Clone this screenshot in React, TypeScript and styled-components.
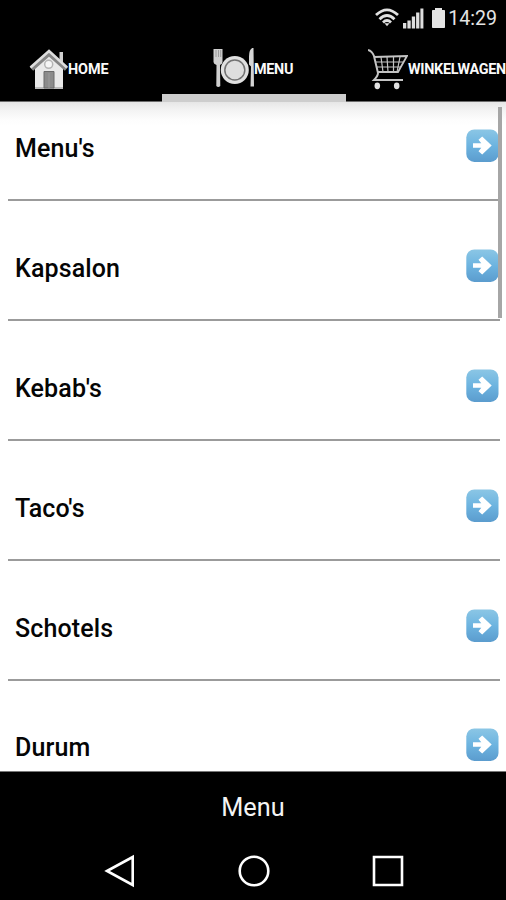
import React from "react";
import styled, { createGlobalStyle } from "styled-components";

const GlobalStyle = createGlobalStyle`
  * { box-sizing: border-box; }
  body { margin: 0; background: #000; overflow: hidden; font-family: Roboto, "Liberation Sans", sans-serif; }
`;

const Screen = styled.div`
  display: flex;
  flex-direction: column;
  width: 506px;
  height: 900px;
  overflow: hidden;
  background: #000;
`;

const StatusBar = styled.header`
  display: flex;
  flex: 0 0 36px;
  align-items: center;
  justify-content: flex-end;
  padding-right: 9px;
  color: #e4e4e4;
`;

const StatusIcons = styled.div`
  display: flex;
  align-items: center;
  margin-top: -1px;
`;

const Clock = styled.time`
  margin: 1px 0 0 2px;
  font-size: 19.6px;
  line-height: 36px;
`;

const TabBar = styled.nav`
  display: flex;
  flex: 0 0 65px;
  min-height: 0;
  height: 65px;
  border-bottom: 1px solid #6c6c6c;
`;

const Tab = styled.button<{ $width: number; $inset: number; $active?: boolean }>`
  position: relative;
  display: flex;
  flex: 0 0 ${(p) => p.$width}px;
  align-items: center;
  height: ${(p) => (p.$active ? 65 : 64)}px;
  margin: 0;
  padding: ${(p) => (p.$active ? 7 : 0)}px 0 0 ${(p) => p.$inset}px;
  border: 0;
  border-bottom: ${(p) => (p.$active ? 8 : 0)}px solid #cdcdcd;
  background: none;
  color: #fafafa;
  font: 700 14.4px/20px Roboto, sans-serif;
  text-align: left;
  white-space: nowrap;

  & + &::before {
    content: "";
    position: absolute;
    top: 15px;
    left: -1px;
    width: 1px;
    height: 34px;
    background: #2e2e2e;
  }
`;

const TabLabel = styled.span<{ $tracking: number }>`
  margin-top: 2px;
  letter-spacing: ${(p) => p.$tracking}px;
`;

const List = styled.main`
  position: relative;
  flex: 0 0 669px;
  overflow: hidden;
  background: linear-gradient(#e6e6e6 0, #f3f3f3 8px, #fdfdfd 18px, #fff 24px);
  padding: 0 6px 0 8px;
`;

const Row = styled.div<{ $first?: boolean }>`
  display: flex;
  align-items: center;
  justify-content: space-between;
  height: ${(p) => (p.$first ? 99.4 : 119.8)}px;
  padding: ${(p) => (p.$first ? 0 : 21)}px 1px 8px 7px;
  border-bottom: 2px solid #9b9b9b;
`;

const RowTitle = styled.span`
  margin-top: 5px;
  color: #050505;
  font-size: 25px;
  font-weight: 500;
  line-height: 34px;
  letter-spacing: 0.12px;
`;

const ArrowIcon = styled.svg`
  display: block;
  flex: none;
  margin: -1px 0 0;
`;

const Scrollbar = styled.div`
  position: absolute;
  top: 5px;
  right: 4px;
  width: 4px;
  height: 211px;
  background: #a6a6a6;
`;

const Caption = styled.footer`
  flex: 0 0 71px;
  border-top: 1px solid #777;
  color: #f4f4f4;
  font-size: 25.3px;
  line-height: 71px;
  text-align: center;
`;

const NavBar = styled.nav`
  display: flex;
  flex: 1;
  align-items: center;
  justify-content: center;
  gap: 98px;
  padding: 0 0 1px 1px;
`;

const NavIcon = styled.svg`
  display: block;
  fill: none;
  stroke: #fff;
  stroke-width: 2.6;
`;

const WifiIcon = () => (
  <svg width="27" height="22" viewBox="0 0 27 22" fill="none" stroke="#e0e0e0" strokeWidth="2.8">
    <path d="M1 8Q12-2.3 23 8" />
    <path d="M4.5 12.2Q12 5 19.5 12.2" />
    <path d="M8 15.5Q12 11.6 16 15.5" />
    <path d="M9.5 16.3h5L12 19.2z" fill="#e0e0e0" stroke="none" />
  </svg>
);

const SignalIcon = () => (
  <svg width="29" height="22" viewBox="0 0 29 22" fill="#dedede">
    <path d="M1 16h3.3v5.5H1zM5.4 13.5h3.3v8H5.4zM9.8 9.5h3.3v12H9.8zM14.1 5.5h3.3v16h-3.3zM18.4 1.5h3v20h-3z" />
  </svg>
);

const BatteryIcon = () => (
  <svg width="15" height="22" viewBox="0 0 15 22" fill="#e4e4e4">
    <path d="M4 1h7v2h2.2q.8 0 .8.8v16.4q0 .8-.8.8H1.8q-.8 0-.8-.8V3.8q0-.8.8-.8H4z" />
  </svg>
);

const HomeIcon = () => (
  <svg width="39" height="41" viewBox="0 0 39 41">
    <path d="M30.5 3h3.5v14h-3.5z" fill="#d0d0d0" />
    <path d="M6 17L20 4l14 13v22.5H6z" fill="#e9e9e9" />
    <path d="M6 39h28" stroke="#bbb" strokeWidth="2" />
    <path d="M2.5 20L20 4.5l17.5 15.5" fill="none" stroke="#858585" strokeWidth="5" />
    <path d="M1.5 18.5L20 2l18 16.5" fill="none" stroke="#ddd" strokeWidth="2.7" />
    <circle cx="19.7" cy="15.3" r="4" fill="#f5f5f5" stroke="#b4b4b4" strokeWidth="1.5" />
    <path d="M15 22.5h10V39H15z" fill="#8b8b8b" stroke="#6b6b6b" />
    <path d="M20 24v15" stroke="#9b9b9b" />
  </svg>
);

const PlateIcon = () => (
  <svg width="41" height="42" viewBox="0 1 41 42">
    <path d="M.5 2h9v13q0 2-2.5 3l.3 21q-2 2-4 0L3.5 18Q.5 17 .5 15z" fill="#d0d0d0" />
    <path d="M3 3v7M5.5 3v7M7.7 3v7" stroke="#8e8e8e" strokeWidth=".8" />
    <circle cx="21.8" cy="23" r="14" fill="#e0e0e0" />
    <circle cx="21.8" cy="23" r="10" fill="#dedede" stroke="#727272" strokeWidth="1.5" />
    <path d="M40.5 .5q-4.5 1-4.5 9v8l2 2-.5 20h3.5z" fill="#d5d5d5" />
  </svg>
);

const CartIcon = () => (
  <svg width="40" height="41" viewBox="0 0 40 41" fill="none" stroke="#c4c4c4">
    <path d="M0 1q4 1 6 6l4 17q0 3-4 7h29" strokeWidth="2" />
    <path d="M6 8l33-1-9 16H10" strokeWidth="1.8" />
    <path d="M8 13h28M9 18h24M13 8l2 15M19 8l1 15M25.5 8v15M32 8l-3 15" strokeWidth="1.2" />
    <ellipse cx="9.3" cy="36.8" rx="2.8" ry="3.4" fill="#e2e2e2" stroke="none" />
    <ellipse cx="28.7" cy="36.8" rx="2.8" ry="3.4" fill="#e2e2e2" stroke="none" />
  </svg>
);

const Arrow = () => (
  <ArrowIcon width="33" height="34" viewBox="0 0 33 34">
    <defs>
      <linearGradient id="arrow-face" x1="0" y1="0" x2="0" y2="1">
        <stop stopColor="#8bc6e5" />
        <stop offset=".5" stopColor="#6db4e0" />
        <stop offset="1" stopColor="#5b9cce" />
      </linearGradient>
    </defs>
    <rect x=".3" y=".5" width="32.2" height="32.4" rx="8" fill="url(#arrow-face)" />
    <path d="M7 14.2h8.3l-2.8-3.5L16.2 7.6 25.7 16.5 16.2 25.4l-3.7-3.1 2.8-3.5H7z" fill="#fff" />
  </ArrowIcon>
);

const categories = ["Menu's", "Kapsalon", "Kebab's", "Taco's", "Schotels", "Durum"];

export default function App() {
  return (
    <>
      <GlobalStyle />
      <Screen>
        <StatusBar>
          <StatusIcons>
            <WifiIcon />
            <SignalIcon />
            <BatteryIcon />
          </StatusIcons>
          <Clock>14:29</Clock>
        </StatusBar>
        <TabBar>
          <Tab $width={162} $inset={29}>
            <HomeIcon />
            <TabLabel $tracking={-0.1}>HOME</TabLabel>
          </Tab>
          <Tab $width={184} $inset={51} $active>
            <PlateIcon />
            <TabLabel $tracking={-0.3}>MENU</TabLabel>
          </Tab>
          <Tab $width={184} $inset={22}>
            <CartIcon />
            <TabLabel $tracking={-0.3}>WINKELWAGEN</TabLabel>
          </Tab>
        </TabBar>
        <List>
          {categories.map((title, index) => (
            <Row key={title} $first={index === 0}>
              <RowTitle>{title}</RowTitle>
              <Arrow />
            </Row>
          ))}
          <Scrollbar />
        </List>
        <Caption>Menu</Caption>
        <NavBar>
          <NavIcon width="36" height="34" viewBox="0 0 36 34">
            <path d="M5 17L30.7 3v28z" />
          </NavIcon>
          <NavIcon width="36" height="34" viewBox="0 0 36 34">
            <circle cx="18" cy="17" r="14.3" />
          </NavIcon>
          <NavIcon width="36" height="34" viewBox="0 0 36 34">
            <path d="M4 3h28v28H4z" />
          </NavIcon>
        </NavBar>
      </Screen>
    </>
  );
}
